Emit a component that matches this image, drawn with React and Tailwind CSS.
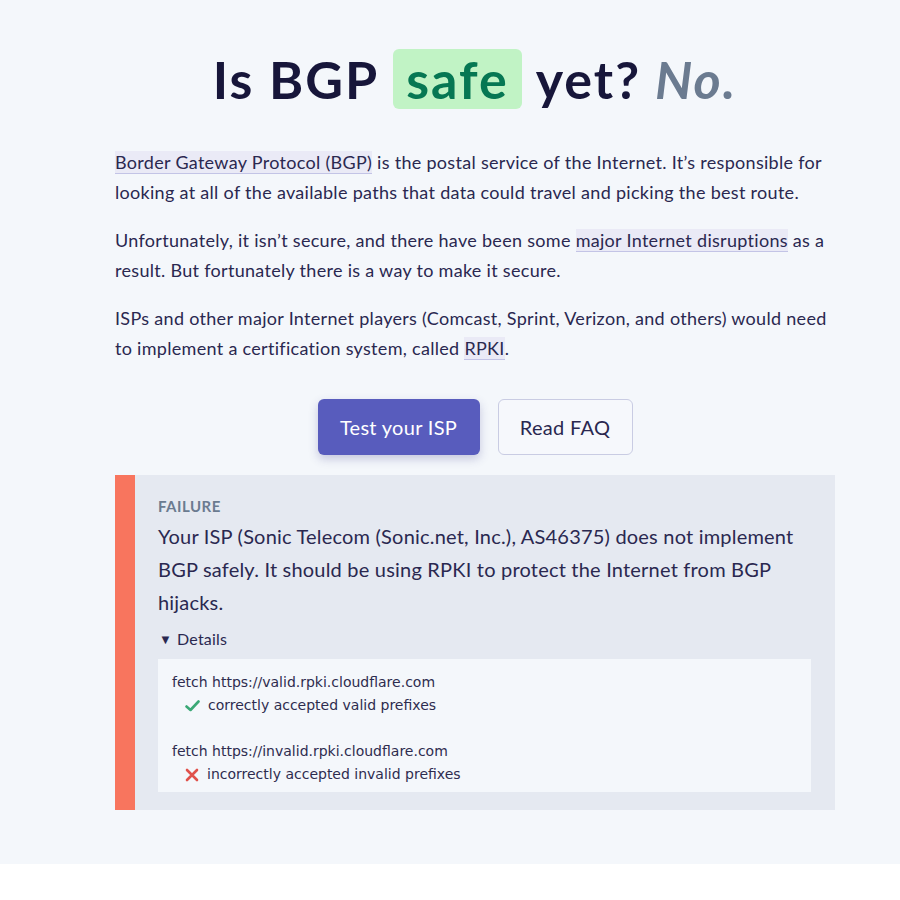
import React from "react";

function Link({ children }) {
  return (
    <span className="bg-[#eaeaf6] border-b border-[#c3c4e6] text-[#2a2850]">{children}</span>
  );
}

function Check() {
  return (
    <svg width="15" height="12" viewBox="0 0 15 12" className="inline-block">
      <path d="M1.5 6.5 L5.5 10 L13.5 1.5" fill="none" stroke="#3aa876" strokeWidth="2.6" strokeLinecap="round" strokeLinejoin="round" />
    </svg>
  );
}

function Cross() {
  return (
    <svg width="14" height="14" viewBox="0 0 14 14" className="inline-block">
      <path d="M2 2 L12 12 M12 2 L2 12" fill="none" stroke="#e0514b" strokeWidth="2.6" strokeLinecap="round" />
    </svg>
  );
}

export default function App() {
  return (
    <div className="bg-white w-[900px] h-[900px] overflow-hidden">
      <div
        className="bg-[#f4f7fb] h-[864px] flex flex-col items-center pl-[50px]"
        style={{ fontFamily: "Lato, 'Noto Sans', sans-serif" }}
      >
        <h1 className="mt-[46px] text-[52px] font-bold text-[#17163a] leading-[66px] flex items-center gap-[14px] tracking-[2px]">
          <span>Is BGP</span>
          <span className="bg-[#c1f3c5] text-[#067753] rounded-[6px] px-[13px] leading-[60px]">safe</span>
          <span>yet?</span>
          <span className="italic text-[#6b7b90]">No.</span>
        </h1>

        <div className="w-[720px] mt-[35px] text-[18px] leading-[30px] text-[#2a2850] tracking-[0.3px]">
          <p>
            <Link>Border Gateway Protocol (BGP)</Link> is the postal service of the Internet. It’s responsible for
            looking at all of the available paths that data could travel and picking the best route.
          </p>
          <p className="mt-[18px]">
            Unfortunately, it isn’t secure, and there have been some <Link>major Internet disruptions</Link> as a
            result. But fortunately there is a way to make it secure.
          </p>
          <p className="mt-[18px]">
            ISPs and other major Internet players (Comcast, Sprint, Verizon, and others) would need to implement a
            certification system, called <Link>RPKI</Link>.
          </p>
        </div>

        <div className="flex gap-[18px] mt-[36px]">
          <button className="h-[56px] w-[162px] rounded-[6px] bg-[#585cbd] text-white text-[20px] tracking-[0.3px] shadow-[0_4px_10px_rgba(60,60,140,0.25)]">
            Test your ISP
          </button>
          <button className="h-[56px] w-[135px] rounded-[6px] bg-[#f6f8fc] border border-[#c9cce3] text-[#2a2850] text-[20px] tracking-[0.3px]">
            Read FAQ
          </button>
        </div>

        <div className="w-[720px] mt-[20px] bg-[#e5e9f1] border-l-[20px] border-[#f8755e] pl-[23px] pr-[24px] pt-[21px] pb-[18px]">
          <div className="text-[15px] font-bold text-[#6b7b90] tracking-[0.5px] leading-[20px]">FAILURE</div>
          <p className="mt-[4px] text-[20px] leading-[33px] text-[#2a2850] tracking-[0.2px]">
            Your ISP (Sonic Telecom (Sonic.net, Inc.), AS46375) does not implement BGP safely. It should be using RPKI
            to protect the Internet from BGP hijacks.
          </p>
          <div className="mt-[8px] text-[16px] leading-[24px] text-[#2a2850] tracking-[0.2px] flex items-center">
            <span className="text-[13px] mr-[5px] ml-[1px]">▼</span>Details
          </div>
          <div
            className="mt-[8px] bg-[#f4f7fb] px-[14px] pt-[12px] pb-[6px] text-[14px] leading-[23px] text-[#2e2c4f]"
            style={{ fontFamily: "'DejaVu Sans', sans-serif" }}
          >
            <div>fetch https://valid.rpki.cloudflare.com</div>
            <div className="flex items-center pl-[13px] gap-[8px]">
              <Check />
              <span>correctly accepted valid prefixes</span>
            </div>
            <div className="h-[23px]" />
            <div>fetch https://invalid.rpki.cloudflare.com</div>
            <div className="flex items-center pl-[13px] gap-[8px]">
              <Cross />
              <span>incorrectly accepted invalid prefixes</span>
            </div>
          </div>
        </div>
      </div>
    </div>
  );
}
